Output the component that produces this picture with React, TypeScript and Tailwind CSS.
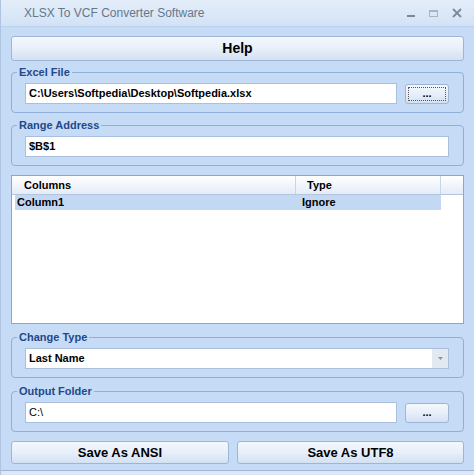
import React from "react";

const btn =
  "rounded-[3px] border border-[#9db6d8] bg-gradient-to-b from-[#f4f8fd] via-[#e7effa] to-[#d3e1f3] text-black font-bold";

const inputBox =
  "h-[21px] border border-[#a9bfdc] bg-white flex items-center px-[3px] text-[11px] font-bold text-black";

function Group({ label, children }: { label: string; children: React.ReactNode }) {
  return (
    <fieldset className="border border-[#8fb0dc] rounded-[4px] p-0 m-0 min-w-0">
      <legend className="ml-[5px] px-[2px] text-[11px] leading-[14px] font-bold text-[#23488a]">
        {label}
      </legend>
      <div className="flex items-center gap-[8px] pl-[13px] pr-[14px] pt-[4px] pb-[8px]">{children}</div>
    </fieldset>
  );
}

function Browse({ focused }: { focused?: boolean }) {
  return (
    <button className={`${btn} w-[44px] h-[20px] flex items-center justify-center text-[11px] p-[2px]`}>
      <span
        className={`w-full h-full flex items-center justify-center leading-none ${
          focused ? "border border-dotted border-[#555]" : ""
        }`}
      >
        ...
      </span>
    </button>
  );
}

export default function App() {
  return (
    <div className="w-[474px] h-[475px] bg-[#c6dbf5] font-['Liberation_Sans',Arial,sans-serif] flex flex-col overflow-hidden border-l border-[#aec4e0]">
      {/* title bar */}
      <div className="h-[27px] shrink-0 flex items-center bg-gradient-to-b from-[#e4eefa] to-[#d2e2f5] border-b border-[#bcd1ec]">
        <span className="ml-[23px] text-[12px] text-[#66778c]">XLSX To VCF Converter Software</span>
        <div className="ml-auto mr-[12px] flex items-center gap-[14px] text-[#7b8898]">
          <span className="w-[8px] h-[2px] bg-[#7b8898] mt-[6px]" />
          <span className="w-[9px] h-[7px] border border-[#a8b4c2] border-t-2" />
          <svg width="10" height="10" viewBox="0 0 10 10">
            <path d="M1 1 L9 9 M9 1 L1 9" stroke="#7b8898" strokeWidth="1.8" />
          </svg>
        </div>
      </div>

      <div className="flex-1 flex flex-col px-[10px] pr-[10px]">
        <button className={`${btn} mt-[9px] h-[25px] text-[14px]`}>Help</button>

        <div className="mt-[4px]">
          <Group label="Excel File">
            <div className={`${inputBox} flex-1`}>C:\Users\Softpedia\Desktop\Softpedia.xlsx</div>
            <Browse focused />
          </Group>
        </div>

        <div className="mt-[5px]">
          <Group label="Range Address">
            <div className={`${inputBox} flex-1`}>$B$1</div>
          </Group>
        </div>

        {/* list view */}
        <div className="mt-[9px] h-[149px] border border-[#8ba7cf] bg-white flex flex-col">
          <div className="h-[19px] flex bg-gradient-to-b from-white to-[#e4ecf7] border-b border-[#b3c6df] text-[11px] font-bold text-black">
            <div className="w-[284px] pl-[12px] flex items-center border-r border-[#c9d5e5]">Columns</div>
            <div className="w-[145px] pl-[11px] flex items-center border-r border-[#c9d5e5]">Type</div>
            <div className="flex-1" />
          </div>
          <div className="ml-[3px] w-[426px] h-[15px] bg-[#c3d8f3] flex items-center text-[11px] font-bold text-black">
            <div className="w-[287px] pl-[2px]">Column1</div>
            <div>Ignore</div>
          </div>
        </div>

        <div className="mt-[6px]">
          <Group label="Change Type">
            <div className="flex-1 h-[21px] border border-[#a9bfdc] bg-white flex items-center">
              <span className="flex-1 pl-[3px] text-[11px] font-bold text-black">Last Name</span>
              <span className="w-[16px] h-full bg-[#e3e9f1] flex items-center justify-center">
                <svg width="5" height="3" viewBox="0 0 5 3">
                  <path d="M0 0 H5 L2.5 3 Z" fill="#8a96a6" />
                </svg>
              </span>
            </div>
          </Group>
        </div>

        <div className="mt-[6px]">
          <Group label="Output Folder">
            <div className={`${inputBox} flex-1 font-normal`}>C:\</div>
            <Browse />
          </Group>
        </div>

        <div className="mt-[9px] flex gap-[8px]">
          <button className={`${btn} w-[218px] h-[23px] text-[13px]`}>Save As ANSI</button>
          <button className={`${btn} flex-1 h-[23px] text-[13px]`}>Save As UTF8</button>
        </div>
      </div>
      <div className="h-[5px] shrink-0 border-t border-[#9fb6d4] bg-[#dde8f4]" />
    </div>
  );
}
